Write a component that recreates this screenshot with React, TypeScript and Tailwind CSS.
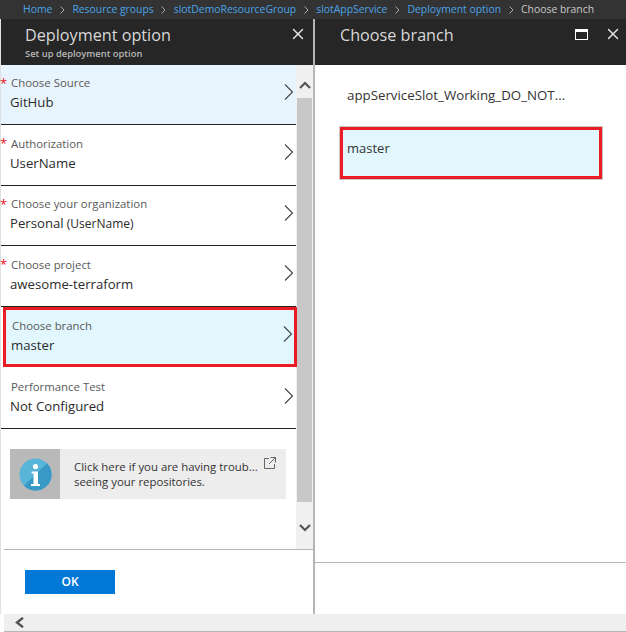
import React from "react";
import { X } from "lucide-react";

const font = { fontFamily: '"Open Sans","Noto Sans",sans-serif' };

function Chevron() {
  return (
    <svg width="10" height="18" viewBox="0 0 10 18" className="shrink-0 -mt-[6px]" fill="none" stroke="#444" strokeWidth="1.1">
      <path d="M1 1.500 L8.500 9 L1 16.500" />
    </svg>
  );
}

function Row({ label, value, sub, req, bg, h, border = true, red = false, extra = "" }: { label: string; value: string; sub?: string; req?: boolean; bg?: string; h: string; border?: boolean; red?: boolean; extra?: string }) {
  return (
    <div className={`${h} ${bg ?? ""} ${border ? "border-b border-[#222]" : ""} ${red ? "border-[3px] border-[#ed1c24] ml-[2px] -mr-[1px] pl-[5px] pr-[1px]" : "pl-[9px] pr-[2px]"} ${extra} relative flex items-center justify-between shrink-0`}>
      {req && <span className="absolute left-[-1px] top-[10px] text-[13px] leading-[16px] text-[#e81123]">*</span>}
      <div className="flex flex-col -mt-[4px]">
        <span className="text-[11.4px] leading-[19px] pl-[1px] text-[#595959]">{label}</span>
        <span className="text-[13.2px] leading-[20px] text-[#2b2b2b]">
          {value}
          {sub && <span className="text-[12px]"> {sub}</span>}
        </span>
      </div>
      <Chevron />
    </div>
  );
}

function Crumb({ t, last }: { t: string; last?: boolean }) {
  return (
    <>
      <span className={last ? "text-[#c8c8c8]" : "text-[#4aa3e8]"}>{t}</span>
      {!last && (
        <svg width="5" height="8" viewBox="0 0 5 8" fill="none" stroke="#aaa" className="mx-[7.5px]">
          <path d="M0.500 0.500 L4 4 L0.500 7.500" />
        </svg>
      )}
    </>
  );
}

export default function App() {
  return (
    <div className="w-[626px] h-[632px] bg-white flex flex-col overflow-hidden" style={font}>
      <div className="h-[19px] bg-[#333333] flex items-center pl-[23px] text-[10.4px] whitespace-nowrap shrink-0">
        <Crumb t="Home" />
        <Crumb t="Resource groups" />
        <Crumb t="slotDemoResourceGroup" />
        <Crumb t="slotAppService" />
        <Crumb t="Deployment option" />
        <Crumb t="Choose branch" last />
      </div>
      <div className="flex h-[595px] shrink-0">
        <div className="w-[315px] shrink-0 flex flex-col border-r-[2px] border-[#b5b5b5] border-l border-l-[#e0e0e0]">
          <div className="h-[46px] bg-[#262626] flex justify-between shrink-0 pl-[24px] pr-[6px]">
            <div className="flex flex-col">
              <span className="text-[16.2px] leading-[26px] mt-[3px] text-[#d8d8d8]">Deployment option</span>
              <span className="text-[9.4px] leading-[12px] font-semibold text-[#b8b8b8]">Set up deployment option</span>
            </div>
            <X size={18} color="#e8e8e8" strokeWidth={1.9} className="mt-[6px]" />
          </div>
          <div className="flex h-[484px] shrink-0">
            <div className="w-[295px] shrink-0 flex flex-col">
              <Row label="Choose Source" value="GitHub" req bg="bg-[#e8f4fd]" h="h-[60px]" />
              <Row label="Authorization" value="UserName" req h="h-[61px]" />
              <Row label="Choose your organization" value="Personal" sub="(UserName)" req h="h-[60px]" />
              <Row label="Choose project" value="awesome-terraform" req h="h-[61px]" />
              <Row label="Choose branch" value="master" bg="bg-[#e1f6fd]" h="h-[60px]" border={false} red />
              <Row label="Performance Test" value="Not Configured" h="h-[62px]" extra="pt-[2px]" />
              <div className="mt-[20px] ml-[9px] w-[276px] h-[50px] bg-[#ededed] flex shrink-0">
                <div className="w-[50px] bg-[#b9b9b9] flex items-center justify-center shrink-0">
                  <svg width="33" height="33" viewBox="0 0 33 33">
                    <circle cx="16.500" cy="16.500" r="16" fill="#59b4d9" />
                    <path d="M28 5.200A16 16 0 0 1 5 27.700Z" fill="#3999c6" />
                    <circle cx="16.500" cy="8.500" r="2.600" fill="#fff" />
                    <path d="M12.500 13.500h6.500v12.500h2v2h-9v-2h2.500v-10.500h-2z" fill="#fff" />
                  </svg>
                </div>
                <div className="flex-1 pl-[14px] pt-[10px] text-[11.4px] leading-[15px] text-[#333] relative">
                  Click here if you are having troub...
                  <br />
                  seeing your repositories.
                  <svg width="12" height="12" viewBox="0 0 12 12" fill="none" stroke="#666" className="absolute right-[10px] top-[8px]">
                    <path d="M5 1.500H0.500V11.500H10.500V7M6.500 0.500H11.500V5.500M11.500 0.500L5 7" />
                  </svg>
                </div>
              </div>
            </div>
            <div className="w-[17px] shrink-0 bg-[#f0f0f0] flex flex-col items-center">
              <div className="h-[33px] w-full flex items-center justify-center shrink-0 pt-[7px]">
                <svg width="12" height="8" viewBox="0 0 12 8" fill="none" stroke="#555" strokeWidth="2.200"><path d="M1 7 L6 2 L11 7" /></svg>
              </div>
              <div className="h-[404px] w-[15px] -ml-[1px] bg-[#c8c8c8] shrink-0" />
              <div className="flex-1 flex items-center justify-center pt-[4px]">
                <svg width="12" height="8" viewBox="0 0 12 8" fill="none" stroke="#555" strokeWidth="2.200"><path d="M1 1 L6 6 L11 1" /></svg>
              </div>
            </div>
          </div>
          <div className="flex-1 border-t border-[#b5b5b5] ml-[3px] pl-[21px] pt-[20px]">
            <div className="w-[90px] h-[24px] bg-[#0078d7] flex items-center justify-center text-[12px] font-semibold text-white">OK</div>
          </div>
        </div>
        <div className="flex-1 flex flex-col">
          <div className="h-[46px] bg-[#262626] flex items-start justify-between shrink-0 pl-[25px] pr-[5px]">
            <span className="text-[16.2px] leading-[26px] mt-[3px] text-[#d8d8d8]">Choose branch</span>
            <div className="flex items-center gap-[16px] mt-[6px]">
              <div className="w-[13px] h-[11px] border border-white border-t-[3px]" />
              <X size={18} color="#e8e8e8" strokeWidth={1.9} />
            </div>
          </div>
          <div className="h-[498px] shrink-0 px-[25px] pt-[21px] border-b border-[#b5b5b5]">
            <div className="h-[20px] flex items-center pl-[7px] text-[13.3px] text-[#333] whitespace-nowrap">appServiceSlot_Working_DO_NOT...</div>
            <div className="mt-[21px] w-[262px] h-[52px] bg-[#e1f6fd] border-[3px] border-[#ed1c24] flex items-start pt-[8px] pl-[4px] text-[13px] leading-[20px] text-[#333] outline outline-1 outline-[#c8c8c8]">master</div>
          </div>
        </div>
      </div>
      <div className="h-[18px] ml-[4px] bg-[#efefef] border-b border-[#b5b5b5] flex items-center pl-[11px] shrink-0">
        <svg width="9" height="11" viewBox="0 0 9 11" fill="none" stroke="#555" strokeWidth="2.400"><path d="M8 0.800 L2 5.500 L8 10.200" /></svg>
      </div>
    </div>
  );
}
